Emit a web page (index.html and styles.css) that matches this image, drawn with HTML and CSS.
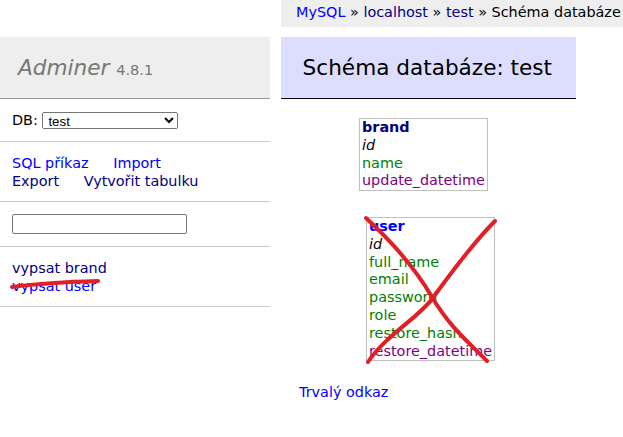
FILE: index.html
```html
<!DOCTYPE html>
<html lang="cs">
<head>
<meta charset="utf-8">
<title>Schéma databáze: test - Adminer</title>
<link rel="stylesheet" href="styles.css">
</head>
<body>
<div class="page">
  <aside class="menu">
    <h1><a href="#" class="brandlink">Adminer</a> <span class="version">4.8.1</span></h1>
    <p class="db-row">DB: <select class="db-select"><option>test</option></select></p>
    <p class="links">
      <a href="#">SQL příkaz</a> <a href="#">Import</a><br>
      <a href="#" class="visited">Export</a> <a href="#" class="visited">Vytvořit tabulku</a>
    </p>
    <p class="search"><input type="search" class="search-input"></p>
    <p class="tables">
      <a href="#" class="visited">vypsat brand</a><br>
      <a href="#">vypsat user</a>
    </p>
  </aside>
  <main class="content">
    <div class="breadcrumb"><a href="#">MySQL</a> » <a href="#" class="visited">localhost</a> » <a href="#" class="visited">test</a> » Schéma databáze</div>
    <h2 class="title">Schéma databáze: test</h2>
    <div class="schema">
      <div class="table table-brand">
        <a href="#" class="tname visited">brand</a><br>
        <span class="int"><i>id</i></span><br>
        <span class="char">name</span><br>
        <span class="date">update_datetime</span>
      </div>
      <div class="table table-user">
        <a href="#" class="tname">user</a><br>
        <span class="int"><i>id</i></span><br>
        <span class="char">full_name</span><br>
        <span class="char">email</span><br>
        <span class="char">password</span><br>
        <span class="char">role</span><br>
        <span class="char">restore_hash</span><br>
        <span class="date">restore_datetime</span>
      </div>
    </div>
    <p class="perm"><a href="#">Trvalý odkaz</a></p>
  </main>
</div>
<svg class="marks" width="623" height="437" viewBox="0 0 623 437" aria-hidden="true">
  <path d="M12,287 C35,284 60,282 98,281" />
  <path d="M366,218 C390,240 415,268 432,297 S468,342 487,361" />
  <path d="M495,221 C470,246 446,280 432,299 S386,335 368,362" />
</svg>
</body>
</html>
```
FILE: styles.css
```css
html, body {
  margin: 0;
  overflow: hidden;
  background: #fff;
}
body {
  font: 14.4px/1.25 "DejaVu Sans", Verdana, sans-serif;
  color: #000;
}
a {
  color: #00f;
  text-decoration: none;
}
a.visited {
  color: #000080;
}
.page {
  display: flex;
  align-items: flex-start;
}
.menu {
  width: 270px;
  flex: none;
  padding-top: 37px;
}
.menu h1 {
  margin: 0;
  font-size: 21.6px;
  line-height: 27px;
  height: 27px;
  padding: 17px 18px;
  border-bottom: 1px solid #999;
  background: #eee;
  font-weight: normal;
  color: #777;
}
.brandlink {
  color: #777;
  font-style: italic;
}
.version {
  font-size: 14.5px;
  line-height: 1;
  color: #777;
}
.menu p {
  margin: 0;
  padding: 11.5px 12px;
  border-bottom: 1px solid #ccc;
}
.db-row {
  height: 19px;
}
.db-select {
  width: 136px;
  height: 17px;
  font: 13.3px "Liberation Sans", Arial, sans-serif;
  vertical-align: top;
  padding: 0 0 0 1px;
  margin: 1px 0 0;
}
.links {
  height: 36px;
}
.links a {
  margin-right: 20px;
  white-space: nowrap;
}
.search {
  height: 21px;
}
.search-input {
  display: block;
  width: 175px;
  height: 20px;
  box-sizing: border-box;
  border: 1px solid #767676;
  border-radius: 2px;
  margin: 0;
}
.tables {
  height: 36px;
}
.content {
  flex: 1;
  min-width: 0;
  margin-left: 11px;
}
.breadcrumb {
  background: #eee;
  height: 27px;
  line-height: 24px;
  padding: 0 15px;
  white-space: nowrap;
}
.title {
  margin: 10px 0 20px;
  width: 295px;
  box-sizing: border-box;
  font-size: 21.6px;
  line-height: 27px;
  padding: 17px 21.6px;
  border-bottom: 1px solid #000;
  background: #ddf;
  font-weight: normal;
}
.schema {
  position: relative;
  margin-left: 78px;
  height: 250px;
}
.table {
  position: absolute;
  border: 1px solid #c0c0c0;
  padding: 0 2px;
  line-height: 17.8px;
  white-space: nowrap;
}
.table-brand {
  top: -1px;
  left: 0;
}
.table-user {
  top: 98px;
  left: 7px;
}
.tname {
  font-weight: bold;
}
.char {
  color: #007f00;
}
.date {
  color: #7f007f;
}
.perm {
  margin: 14.4px 0;
  padding-left: 18px;
}
.marks {
  position: absolute;
  top: 0;
  left: 0;
  pointer-events: none;
}
.marks path {
  fill: none;
  stroke: #e21f26;
  stroke-width: 4;
  stroke-linecap: round;
  stroke-linejoin: round;
}
```
